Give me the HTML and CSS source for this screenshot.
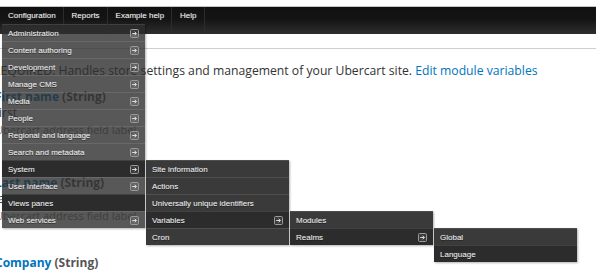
FILE: index.html
```html
<!DOCTYPE html>
<html>
  <head>
    <title>Store settings</title>
    <meta charset="UTF-8">
    <link rel="stylesheet" href="styles.css">
  </head>
  <body>
    <svg class="defs" width="0" height="0">
      <symbol id="arr" viewBox="0 0 9 9">
        <rect x="0.5" y="0.5" width="8" height="8" rx="1" fill="rgba(255,255,255,0.08)" stroke="#9a9a9a"/>
        <path d="M2.2 4.5H6.4M4.6 2.7L6.4 4.5L4.6 6.3" fill="none" stroke="#dcdcdc" stroke-width="1"/>
      </symbol>
    </svg>
    <div class="topgap"></div>
    <nav class="toolbar">
      <ul class="menu">
        <li class="top"><span class="top-label">Configuration</span>
          <ul class="drop">
            <li class="item"><span>Administration</span><svg class="arr"><use href="#arr"/></svg></li>
            <li class="item"><span>Content authoring</span><svg class="arr"><use href="#arr"/></svg></li>
            <li class="item"><span>Development</span><svg class="arr"><use href="#arr"/></svg></li>
            <li class="item"><span>Manage CMS</span><svg class="arr"><use href="#arr"/></svg></li>
            <li class="item"><span>Media</span><svg class="arr"><use href="#arr"/></svg></li>
            <li class="item"><span>People</span><svg class="arr"><use href="#arr"/></svg></li>
            <li class="item"><span>Regional and language</span><svg class="arr"><use href="#arr"/></svg></li>
            <li class="item"><span>Search and metadata</span><svg class="arr"><use href="#arr"/></svg></li>
            <li class="item is-open"><span>System</span><svg class="arr"><use href="#arr"/></svg>
              <ul class="drop sub">
                <li class="item"><span>Site information</span></li>
                <li class="item"><span>Actions</span></li>
                <li class="item"><span>Universally unique identifiers</span></li>
                <li class="item is-open"><span>Variables</span><svg class="arr"><use href="#arr"/></svg>
                  <ul class="drop sub">
                    <li class="item"><span>Modules</span></li>
                    <li class="item is-open"><span>Realms</span><svg class="arr"><use href="#arr"/></svg>
                      <ul class="drop sub">
                        <li class="item"><span>Global</span></li>
                        <li class="item is-open"><span>Language</span></li>
                      </ul>
                    </li>
                  </ul>
                </li>
                <li class="item"><span>Cron</span></li>
              </ul>
            </li>
            <li class="item"><span>User interface</span><svg class="arr"><use href="#arr"/></svg></li>
            <li class="item is-open"><span>Views panes</span></li>
            <li class="item"><span>Web services</span><svg class="arr"><use href="#arr"/></svg></li>
          </ul>
        </li>
        <li class="top"><span class="top-label">Reports</span></li>
        <li class="top"><span class="top-label">Example help</span></li>
        <li class="top"><span class="top-label">Help</span></li>
      </ul>
    </nav>
    <div class="tabs"></div>
    <main class="content">
      <p class="intro">REQUIRED: Handles store settings and management of your Ubercart site. <a href="#">Edit module variables</a></p>
      <div class="field">
        <h3 class="field-name"><a href="#">First name</a> (String)</h3>
        <div class="field-value">first</div>
        <div class="field-desc">Ubercart address field label</div>
      </div>
      <div class="field">
        <h3 class="field-name"><a href="#">Last name</a> (String)</h3>
        <div class="field-value">last</div>
        <div class="field-desc">Ubercart address field label</div>
      </div>
      <div class="field field-last">
        <h3 class="field-name"><a href="#">Company</a> (String)</h3>
      </div>
    </main>
  </body>
</html>
```

FILE: styles.css
```css
html, body {
  margin: 0;
}
body {
  width: 596px;
  height: 272px;
  overflow: hidden;
  background: #fff;
  color: #333;
  font-family: 'Open Sans', sans-serif;
}
.defs {
  position: absolute;
}
.topgap {
  height: 6px;
  border-bottom: 1px solid #c4c4c4;
}
.toolbar {
  height: 27px;
  background: linear-gradient(#111 0, #141414 45%, #2f2f2f 100%);
  position: relative;
  z-index: 2;
}
.menu {
  list-style: none;
  margin: 0;
  padding: 0;
  display: flex;
  height: 100%;
  font: 8px 'Liberation Sans', sans-serif;
}
.top {
  position: relative;
  padding: 0 7px 0 8px;
  border-right: 1px solid #2c2c2c;
  color: #eee;
  text-shadow: 0 0 1px rgba(255,255,255,0.35);
}
.top-label {
  display: block;
  line-height: 18px;
}
.drop {
  position: absolute;
  top: 17px;
  left: 2px;
  width: 143px;
  list-style: none;
  margin: 0;
  padding: 0;
  background: rgba(46,46,46,0.8);
  box-shadow: 1px 1px 2px rgba(0,0,0,0.3);
}
.item {
  position: relative;
  display: flex;
  align-items: center;
  justify-content: space-between;
  height: 16px;
  padding: 0 6px;
  border-top: 1px solid rgba(255,255,255,0.1);
  color: #eee;
  text-shadow: 0 1px 0 rgba(0,0,0,0.5), 0 0 1px rgba(255,255,255,0.3);
  white-space: nowrap;
}
.item.is-open {
  background: #2c2c2c;
}
.arr {
  width: 9px;
  height: 9px;
  flex: none;
}
.drop .sub {
  top: -1px;
  left: calc(100% + 1px);
  background: #3a3a3a;
}
.tabs {
  height: 14px;
  border-bottom: 1px solid #cfcfcf;
}
.content {
  margin-left: -5px;
}
.intro {
  margin: 13px 0 0 -2px;
  font-size: 12.2px;
  line-height: 18px;
  white-space: nowrap;
}
.content a {
  color: #0074bd;
  text-decoration: none;
}
.field {
  margin-bottom: 35px;
}
.intro + .field {
  margin-top: 8px;
}
.field-name {
  margin: 0;
  font-size: 12px;
  font-weight: 700;
  line-height: 17px;
  color: #555;
}
.field-value {
  font-size: 12px;
  line-height: 16px;
}
.field-desc {
  font-size: 11px;
  line-height: 18px;
  color: #777;
}
.field-last {
  margin-top: -6px;
}
```
